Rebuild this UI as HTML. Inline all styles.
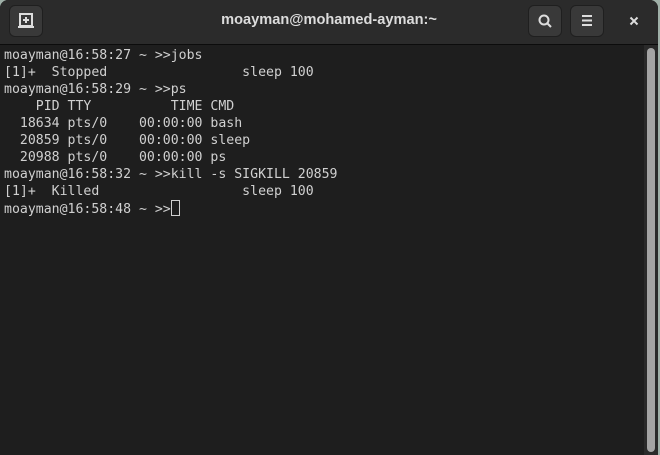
<!DOCTYPE html>
<html><head><style>
html,body{margin:0;padding:0;width:660px;height:455px;overflow:hidden;background:#9fb0a8}
.win{position:absolute;left:0;top:0;width:658px;height:455px;background:#1e1e1e;border-radius:8px 8px 0 0;overflow:hidden}
.hdr{position:absolute;left:0;top:0;width:658px;height:44px;background:#2b2b2b;border-bottom:1px solid #0c0c0c}
.btn{position:absolute;top:5px;width:34px;height:32px;background:#393939;border-radius:6px;border:1px solid #1f1f1f;box-sizing:border-box}
.title{position:absolute;left:0;width:658px;top:12px;text-align:center;color:#dcdcdc;font:bold 14.6px "Liberation Sans",sans-serif}
pre{position:absolute;left:4px;top:47px;margin:0;font:13.2px/17px "DejaVu Sans Mono",monospace;color:#d0d0d0}
.cur{display:inline-block;width:7px;height:14px;border:1px solid #d0d0d0;vertical-align:-3px}
.trough{position:absolute;left:644px;top:45px;width:14px;height:410px;background:#2a2a2a}
.thumb{position:absolute;left:647px;top:48px;width:8px;height:404px;background:#a4a4a4;border-radius:4px}
</style></head><body>
<div class="win">
<div class="hdr">
<div class="btn" style="left:9px"><svg width="32" height="30" viewBox="0 0 32 30"><rect x="10" y="8" width="12" height="12" fill="none" stroke="#ddd" stroke-width="2"/><path d="M16 11v6M13 14h6" stroke="#ddd" stroke-width="2"/><path d="M8 21h16" stroke="#ddd" stroke-width="2"/></svg></div>
<div class="title">moayman@mohamed-ayman:~</div>
<div class="btn" style="left:528px"><svg width="32" height="30" viewBox="0 0 32 30"><circle cx="15" cy="14" r="4.5" fill="none" stroke="#ddd" stroke-width="2"/><path d="M18 17l4 4" stroke="#ddd" stroke-width="2"/></svg></div>
<div class="btn" style="left:570px"><svg width="32" height="30" viewBox="0 0 32 30"><path d="M11 10h10M11 14.5h10M11 19h10" stroke="#ddd" stroke-width="2"/></svg></div>
<svg style="position:absolute;left:626px;top:13px" width="16" height="16" viewBox="0 0 16 16"><path d="M4.5 4.5l7 7M11.5 4.5l-7 7" stroke="#ddd" stroke-width="2"/></svg>
</div>
<pre>moayman@16:58:27 ~ &gt;&gt;jobs
[1]+  Stopped                 sleep 100
moayman@16:58:29 ~ &gt;&gt;ps
    PID TTY          TIME CMD
  18634 pts/0    00:00:00 bash
  20859 pts/0    00:00:00 sleep
  20988 pts/0    00:00:00 ps
moayman@16:58:32 ~ &gt;&gt;kill -s SIGKILL 20859
[1]+  Killed                  sleep 100
moayman@16:58:48 ~ &gt;&gt;<span class="cur"></span></pre>
<div class="trough"></div><div class="thumb"></div>
</div>
</body></html>
